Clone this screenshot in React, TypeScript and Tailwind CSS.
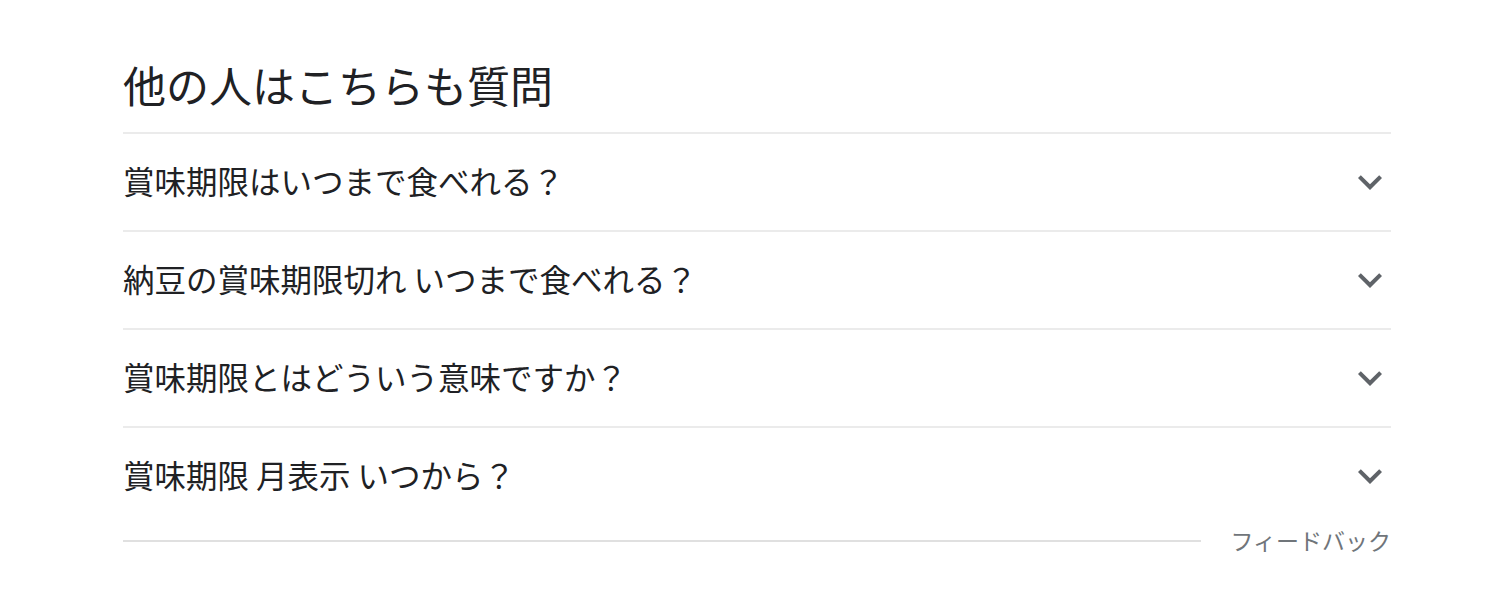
const questions = [
  "賞味期限はいつまで食べれる？",
  "納豆の賞味期限切れ いつまで食べれる？",
  "賞味期限とはどういう意味ですか？",
  "賞味期限 月表示 いつから？",
];

function ExpandMore() {
  return (
    <svg width="48" height="48" viewBox="0 0 24 24" fill="#5f6368" className="mr-[-3px]">
      <path d="M7.41 8.59L12 13.17l4.59-4.58L18 10l-6 6-6-6 1.41-1.41z" />
    </svg>
  );
}

export default function App() {
  return (
    <div
      className="min-h-[614px] w-full bg-white"
      style={{ fontFamily: '"Noto Sans CJK JP", "Noto Sans", sans-serif' }}
    >
      <div className="ml-[123px] w-[1268px] pt-[56px]">
        <h2 className="mb-[20px] h-[56px] text-[43px] leading-[56px] font-normal text-[#202124]">
          他の人はこちらも質問
        </h2>
        <div className="h-[2px] bg-[#ebebeb]" />
        {questions.map((q, i) => (
          <div key={q}>
            <div className="flex h-[96px] items-center justify-between">
              <span className="mb-[4px] text-[31.5px] leading-[40px] text-[#202124]">{q}</span>
              <ExpandMore />
            </div>
            {i < questions.length - 1 && <div className="h-[2px] bg-[#ebebeb]" />}
          </div>
        ))}
        <div className="flex h-[34px] items-center gap-[29px]">
          <div className="h-[2px] flex-1 bg-[#e0e0e0]" />
          <span className="mb-[2px] text-[23px] leading-[28px] text-[#70757a]">フィードバック</span>
        </div>
      </div>
    </div>
  );
}
